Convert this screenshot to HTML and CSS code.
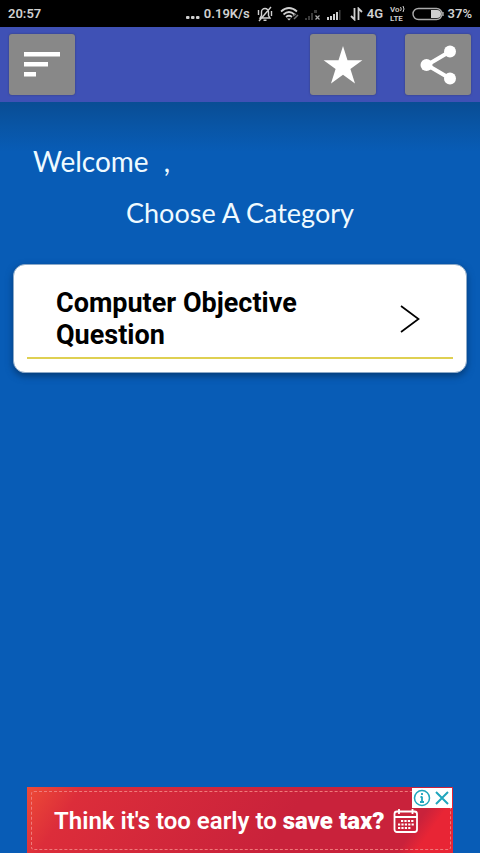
FILE: index.html
```html
<!DOCTYPE html>
<html lang="en">
<head>
<meta charset="utf-8">
<meta name="viewport" content="width=device-width, initial-scale=1">
<title>Choose A Category</title>
<link rel="stylesheet" href="styles.css">
</head>
<body>
<div class="status">
  <span class="clock">20:57</span>
  <div class="indicators">
    <svg width="14" height="14" viewBox="0 0 14 14" fill="currentColor"><rect y="9" width="3.500" height="3" rx="1"/><rect x="5" y="9" width="3.500" height="3" rx="1"/><rect x="10" y="9" width="3.500" height="3" rx="1"/></svg>
    <span>0.19K/s</span>
    <svg class="bell" width="16" height="16" viewBox="0 0 16 16" fill="none" stroke="currentColor" stroke-width="1.400"><path d="M3 12h10L11.500 9.500V6a3.500 3.500 0 0 0-7 0v3.500zM6.500 14.200h3M14 1L2 15M1.500 4v5M14.500 5v5"/></svg>
    <svg class="wifi" width="20" height="16" viewBox="0 0 20 16" fill="none" stroke="currentColor" stroke-width="1.700"><path d="M1 5.500Q9 -1.500 17 5.500M3.500 8.500Q9 3.500 14.500 8.500M6 11Q9 8.500 12 11"/><path d="M7 12.500h4L9 14.500z" fill="currentColor" stroke="none"/><path d="M14 13l4-4M13 10l3-2" stroke="#777" stroke-width="1.500"/></svg>
    <svg width="18" height="14" viewBox="0 0 18 14"><path d="M1 13v-2h2v2zM4 13V9h2v4zM7 13V6h2v7zM10 6V3h3v3z" fill="#3c3c3c"/><path d="M11.500 8.500l4 4m0-4l-4 4" stroke="#aaa" stroke-width="1.200"/></svg>
    <svg class="signal" width="16" height="14" viewBox="0 0 16 14" fill="currentColor"><path d="M1 13v-3h2v3zM4 13V9h2v4zM7 13V7h2v6zM10 13V5h2v8z"/><path d="M13 13V3h1.500v10z" fill="#444"/></svg>
    <svg width="13" height="14" viewBox="0 0 13 14" fill="none" stroke="currentColor" stroke-width="1.800"><path d="M4.500 1v11.500L1 9M8.500 13V1.500L12 5"/></svg>
    <span>4G</span>
    <span class="volte">
      <span class="vo">Vo<svg width="5" height="6" viewBox="0 0 5 6" fill="none" stroke="currentColor"><path d="M.5 1q1.500 2 0 4M3 0q2 3 0 6"/></svg></span>
      <span>LTE</span>
    </span>
    <svg width="32" height="14" viewBox="0 0 32 14"><rect x="1" y="1.500" width="29" height="11" rx="5.500" fill="none" stroke="#aaa" stroke-width="1.400"/><path d="M19 3h6q4 0 4 4t-4 4h-6z" fill="currentColor"/><path d="M31 5v4" stroke="#aaa" stroke-width="1.400"/></svg>
    <span>37%</span>
  </div>
</div>
<header class="toolbar">
  <button class="tool menu" aria-label="Menu"><svg width="36" height="25" viewBox="0 0 36 25" fill="#fff"><path d="M0 0h36v4.500H0zM0 10h24v4.500H0zM0 20h12v4.500H0z"/></svg></button>
  <button class="tool" aria-label="Rate"><svg width="40" height="40" viewBox="0 0 40 40" fill="#fff"><path d="M20 1L24.500 15.200H39.400L27.400 24L32 38.500L20 29.800L8 38.500L12.600 24L.6 15.200H15.500z"/></svg></button>
  <button class="tool" aria-label="Share"><svg width="36" height="40" viewBox="0 0 36 40" fill="#fff"><path d="M30 6.500L7 20l23 13.500" fill="none" stroke="#fff" stroke-width="4"/><circle cx="30" cy="6.500" r="6"/><circle cx="6.500" cy="20" r="6"/><circle cx="30" cy="33.500" r="6"/></svg></button>
</header>
<main>
  <p class="welcome">Welcome <span class="comma">,</span></p>
  <h1>Choose A Category</h1>
  <a class="card" href="#quiz">
    <span class="row">
      <span class="title">Computer Objective Question</span>
      <svg width="20" height="28" viewBox="0 0 20 28" fill="none" stroke="#000" stroke-width="1.700"><path d="M1 1l17.500 13L1 27"/></svg>
    </span>
  </a>
</main>
<aside class="ad">
  <a class="banner" href="#ad">
    <span>Think it's too early to <b>save tax?</b></span>
    <svg width="26" height="26" viewBox="0 0 26 26" fill="none" stroke="#fff" stroke-width="1.800"><rect x="1.500" y="3.500" width="22.500" height="20.500" rx="2.500"/><path d="M1.500 9h22.500M6 1v5M19.500 1v5"/><path d="M8 13h13M5 16.500h16M5 20h13" stroke-width="2.200" stroke-dasharray="2.200 1.200"/></svg>
  </a>
  <div class="choices">
    <button aria-label="About this ad"><svg width="18" height="18" viewBox="0 0 18 18" fill="none" stroke="#20a5bd" stroke-width="1.500"><circle cx="9" cy="9" r="7.500"/><path d="M9 7.500v5.500M9 4v2M7.500 8H9M7 13h4" stroke-width="1.800"/></svg></button>
    <button aria-label="Close ad"><svg width="18" height="18" viewBox="0 0 18 18" stroke="#20a5bd" stroke-width="2"><path d="M3 3l12 12M15 3L3 15"/></svg></button>
  </div>
</aside>
</body>
</html>
```
FILE: styles.css
```css
* { box-sizing: border-box; }
body {
  margin: 0;
  min-height: 100vh;
  display: flex;
  flex-direction: column;
  background: #085cb6;
  font-family: Roboto, "Liberation Sans", sans-serif;
}
button { padding: 0; border: 0; cursor: pointer; }
svg { display: block; flex: none; }
.status {
  display: flex;
  justify-content: space-between;
  align-items: center;
  height: 27px;
  padding: 0 8px;
  background: #000;
  color: #d0d0d0;
  font-size: 13px;
  font-weight: 600;
}
.indicators { display: flex; align-items: center; gap: 4px; }
.bell { margin-left: 3px; }
.wifi { margin-left: 3px; }
.signal { margin-right: 4px; }
.volte {
  display: flex;
  flex-direction: column;
  margin: 0 3px;
  font-size: 8px;
  line-height: 9px;
}
.vo { display: flex; align-items: center; }
.toolbar {
  display: flex;
  gap: 29px;
  height: 75px;
  padding: 7px 9px;
  background: #3f51b5;
}
.tool {
  display: grid;
  place-items: center;
  width: 66px;
  height: 61px;
  border-radius: 3px;
  background: #888;
  box-shadow: 0 0 2px #333a70;
}
.menu { margin-right: auto; }
main {
  flex: 1;
  padding: 39px 13px;
  background: linear-gradient(#094d94, #0955a5 24px, #085cb6 50px);
  color: #effaff;
}
.welcome, h1 {
  margin: 0;
  font-family: Lato, "Liberation Sans", sans-serif;
  font-size: 28px;
  line-height: 40px;
  font-weight: 400;
}
.welcome { padding-left: 20px; }
.comma { margin-left: 8px; }
h1 {
  margin-top: 12px;
  font-size: 27px;
  text-align: center;
}
.card {
  display: block;
  margin-top: 31px;
  padding: 22px 13px 13px;
  border: 1px solid #8ca9c8;
  border-radius: 12px;
  background: #fff;
  box-shadow: 0 3px 7px #043c78;
  color: #000;
  text-decoration: none;
}
.row {
  display: flex;
  justify-content: space-between;
  align-items: center;
  padding: 0 33px 6px 29px;
  border-bottom: 2px solid #dfd052;
}
.title {
  max-width: 280px;
  font-size: 27px;
  line-height: 32px;
  font-weight: 700;
}
.ad {
  position: relative;
  margin: 0 27px;
}
.banner {
  display: flex;
  align-items: center;
  gap: 8px;
  height: 66px;
  padding: 2px 27px 0;
  background: linear-gradient(125deg, #ed4b37, #dc2d3a 12%, #c9223b 60%, #c9223b 88%, #e82535 92%);
  color: #fff;
  font-size: 24px;
  font-weight: 600;
  text-decoration: none;
  white-space: nowrap;
}
.banner::before {
  content: "";
  position: absolute;
  inset: 4px 2px 3px 4px;
  border: 1px dashed #ef7b7a;
  border-radius: 3px;
}
.choices {
  position: absolute;
  top: 1px;
  right: 1px;
  display: flex;
  gap: 2px;
  padding: 1px;
  background: #fff;
}
.choices button { background: none; }
```
